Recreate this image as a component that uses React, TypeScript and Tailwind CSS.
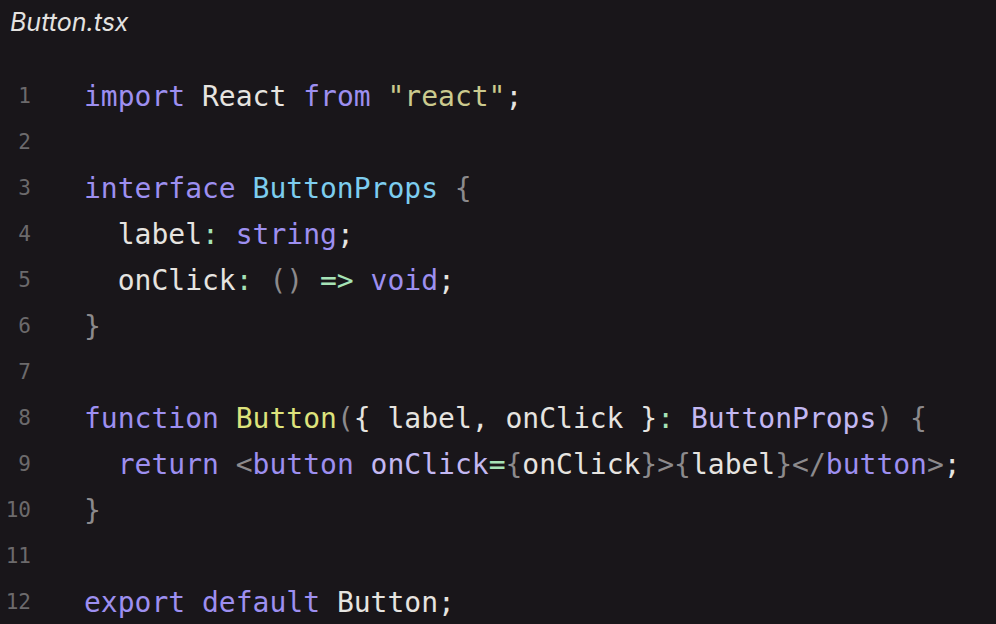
type Tok = { t: string; c: string };

const KW = "text-[#9d8ff0]";
const TX = "text-[#e6e4e0]";
const PU = "text-[#8c8a8c]";
const GR = "text-[#a6e3b6]";
const ST = "text-[#cbca8e]";
const CY = "text-[#7dcdef]";
const FN = "text-[#dde37c]";
const TY = "text-[#c3b8f2]";

const lines: Tok[][] = [
    [
        { t: "import", c: KW },
        { t: " React ", c: TX },
        { t: "from", c: KW },
        { t: " ", c: TX },
        { t: '"react"', c: ST },
        { t: ";", c: TX },
    ],
    [],
    [
        { t: "interface", c: KW },
        { t: " ", c: TX },
        { t: "ButtonProps", c: CY },
        { t: " {", c: PU },
    ],
    [
        { t: "  label", c: TX },
        { t: ":", c: GR },
        { t: " ", c: TX },
        { t: "string", c: KW },
        { t: ";", c: TX },
    ],
    [
        { t: "  onClick", c: TX },
        { t: ":", c: GR },
        { t: " ()", c: PU },
        { t: " =>", c: GR },
        { t: " ", c: TX },
        { t: "void", c: KW },
        { t: ";", c: TX },
    ],
    [{ t: "}", c: PU }],
    [],
    [
        { t: "function", c: KW },
        { t: " ", c: TX },
        { t: "Button", c: FN },
        { t: "(", c: PU },
        { t: "{ label, onClick }", c: TX },
        { t: ":", c: GR },
        { t: " ", c: TX },
        { t: "ButtonProps", c: TY },
        { t: ")", c: PU },
        { t: " {", c: PU },
    ],
    [
        { t: "  ", c: TX },
        { t: "return", c: KW },
        { t: " ", c: TX },
        { t: "<", c: PU },
        { t: "button", c: KW },
        { t: " ", c: TX },
        { t: "onClick", c: TY },
        { t: "=", c: GR },
        { t: "{", c: PU },
        { t: "onClick", c: TX },
        { t: "}>{", c: PU },
        { t: "label", c: TX },
        { t: "}</", c: PU },
        { t: "button", c: KW },
        { t: ">", c: PU },
        { t: ";", c: TX },
    ],
    [{ t: "}", c: PU }],
    [],
    [
        { t: "export", c: KW },
        { t: " ", c: TX },
        { t: "default", c: KW },
        { t: " Button;", c: TX },
    ],
];

function App() {
    return (
        <div className="w-[996px] h-[624px] overflow-hidden bg-[#19161a]">
            <div className="pl-[10px] pt-[7px] h-[74px] text-[25px] leading-[30px] italic text-[#e4e2e0] font-['Inter','Noto_Sans',sans-serif]">
                Button.tsx
            </div>
            <div className="flex flex-col font-['DejaVu_Sans_Mono',monospace]">
                {lines.map((toks, i) => (
                    <div key={i} className="flex h-[46px] items-center">
                        <span className="w-[31px] text-right text-[21px] text-[#6c6a6c]">
                            {i + 1}
                        </span>
                        <pre className="ml-[53px] text-[28px] leading-[46px] font-['DejaVu_Sans_Mono',monospace]">
                            {toks.map((tk, j) => (
                                <span key={j} className={tk.c}>
                                    {tk.t}
                                </span>
                            ))}
                        </pre>
                    </div>
                ))}
            </div>
        </div>
    );
}

export default App;
